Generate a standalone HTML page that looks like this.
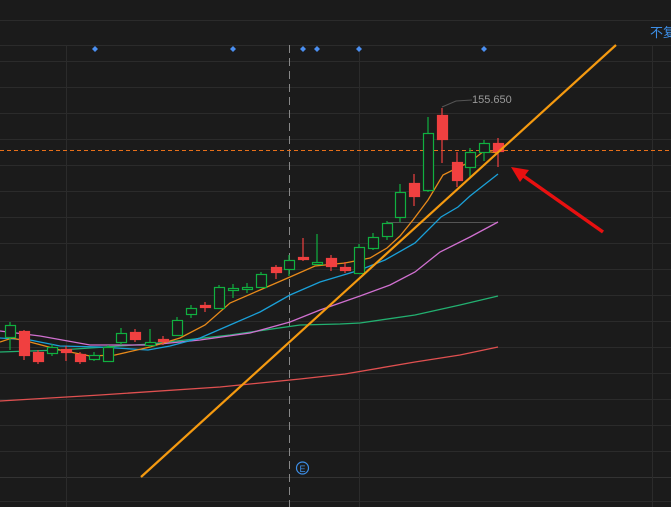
<!DOCTYPE html>
<html><head><meta charset="utf-8"><style>
html,body{margin:0;padding:0;background:#1b1b1b;width:671px;height:507px;overflow:hidden}
svg{display:block}
</style></head><body>
<svg width="671" height="507" viewBox="0 0 671 507" xmlns="http://www.w3.org/2000/svg">
<rect width="671" height="507" fill="#1b1b1b"/>
<g stroke="#2b2b2b" stroke-width="1">
<line x1="0" y1="20.5" x2="671" y2="20.5"/>
<line x1="0" y1="45.5" x2="671" y2="45.5"/>
<line x1="0" y1="61.5" x2="671" y2="61.5"/>
<line x1="0" y1="87.5" x2="671" y2="87.5"/>
<line x1="0" y1="113.5" x2="671" y2="113.5"/>
<line x1="0" y1="139.5" x2="671" y2="139.5"/>
<line x1="0" y1="165.5" x2="671" y2="165.5"/>
<line x1="0" y1="191.5" x2="671" y2="191.5"/>
<line x1="0" y1="217.5" x2="671" y2="217.5"/>
<line x1="0" y1="243.5" x2="671" y2="243.5"/>
<line x1="0" y1="269.5" x2="671" y2="269.5"/>
<line x1="0" y1="295.5" x2="671" y2="295.5"/>
<line x1="0" y1="321.5" x2="671" y2="321.5"/>
<line x1="0" y1="347.5" x2="671" y2="347.5"/>
<line x1="0" y1="373.5" x2="671" y2="373.5"/>
<line x1="0" y1="399.5" x2="671" y2="399.5"/>
<line x1="0" y1="425.5" x2="671" y2="425.5"/>
<line x1="0" y1="451.5" x2="671" y2="451.5"/>
<line x1="0" y1="477.5" x2="671" y2="477.5" stroke="#333"/>
<line x1="0" y1="501.5" x2="671" y2="501.5"/>
<line x1="66.5" y1="45" x2="66.5" y2="507"/>
<line x1="359.5" y1="45" x2="359.5" y2="507"/>
<line x1="652.5" y1="45" x2="652.5" y2="507"/>
</g>
<line x1="289.5" y1="45" x2="289.5" y2="507" stroke="#888" stroke-width="1" stroke-dasharray="8,5"/>
<text x="650" y="37" font-family="Liberation Sans, Noto Sans CJK SC, sans-serif" font-size="13" fill="#3d8fe8">不复</text>
<g fill="#4a8ef0">
<path d="M95 46l3 3-3 3-3-3z"/><path d="M233 46l3 3-3 3-3-3z"/><path d="M303 46l3 3-3 3-3-3z"/><path d="M317 46l3 3-3 3-3-3z"/><path d="M359 46l3 3-3 3-3-3z"/><path d="M484 46l3 3-3 3-3-3z"/>
</g>
<line x1="0" y1="150.5" x2="671" y2="150.5" stroke="#e8701a" stroke-width="1" stroke-dasharray="4,3"/>
<line x1="387" y1="222.5" x2="498" y2="222.5" stroke="#555" stroke-width="1"/>
<g fill="none" stroke-width="1.3">
<polyline stroke="#e05050" points="0,401 100,395 220,387 300,379 345,374 415,362 460,355 498,347"/>
<polyline stroke="#22b070" points="0,352 60,350 150,344 230,335 300,325 340,324 360,323 415,315 460,305 498,296"/>
<polyline stroke="#d070d0" points="0,331 40,336 90,345 150,345 200,340 250,333 290,322 320,310 360,296 390,285 415,272 440,252 470,237 498,222"/>
<polyline stroke="#1aa0d8" points="0,338 30,340 60,346 100,347 148,350 170,346 200,338 230,325 260,312 290,295 320,282 360,270 385,260 415,243 441,217 458,207 470,196 498,174"/>
<polyline stroke="#e88a1a" points="0,342 12,338 30,342 60,350 90,356 115,355 150,347 180,338 205,325 230,303 260,290 290,277 315,266 345,263 370,258 387,248 400,236 413,220 428,200 443,175 457,168 470,162 484,151 498,153"/>
</g>
<g stroke-width="1.2">
<g stroke="#10b040" fill="#1b1b1b">
<line x1="10" y1="322" x2="10" y2="350"/><rect x="5.5" y="325.5" width="10" height="12"/>
<line x1="52" y1="344" x2="52" y2="356"/><rect x="47.5" y="347.5" width="10" height="6"/>
<line x1="94" y1="352" x2="94" y2="361"/><rect x="89.5" y="355.5" width="10" height="4"/>
<line x1="108" y1="345" x2="108" y2="362"/><rect x="103.5" y="347.5" width="10" height="14"/>
<line x1="121" y1="328" x2="121" y2="345"/><rect x="116.5" y="333.5" width="10" height="9"/>
<line x1="150" y1="329" x2="150" y2="347"/><rect x="145.5" y="342.5" width="10" height="3"/>
<line x1="177" y1="317" x2="177" y2="336"/><rect x="172.5" y="320.5" width="10" height="15"/>
<line x1="191" y1="305" x2="191" y2="318"/><rect x="186.5" y="308.5" width="10" height="6"/>
<line x1="219" y1="285" x2="219" y2="309"/><rect x="214.5" y="287.5" width="10" height="21"/>
<line x1="233" y1="284" x2="233" y2="298"/><rect x="228.5" y="288.5" width="10" height="2"/>
<line x1="247" y1="283" x2="247" y2="293"/><rect x="242.5" y="287.5" width="10" height="2"/>
<line x1="261" y1="272" x2="261" y2="288"/><rect x="256.5" y="274.5" width="10" height="13"/>
<line x1="289" y1="255" x2="289" y2="276"/><rect x="284.5" y="260.5" width="10" height="9"/>
<line x1="317" y1="234" x2="317" y2="265"/><rect x="312.5" y="262.5" width="10" height="2"/>
<line x1="359" y1="244" x2="359" y2="274"/><rect x="354.5" y="247.5" width="10" height="26"/>
<line x1="373" y1="233" x2="373" y2="250"/><rect x="368.5" y="237.5" width="10" height="11"/>
<line x1="387" y1="221" x2="387" y2="240"/><rect x="382.5" y="223.5" width="10" height="13"/>
<line x1="400" y1="184" x2="400" y2="222"/><rect x="395.5" y="192.5" width="10" height="25"/>
<line x1="428" y1="117" x2="428" y2="192"/><rect x="423.5" y="133.5" width="10" height="57"/>
<line x1="470" y1="148" x2="470" y2="177"/><rect x="465.5" y="152.5" width="10" height="15"/>
<line x1="484" y1="140" x2="484" y2="161"/><rect x="479.5" y="143.5" width="10" height="9"/>
</g>
<g stroke="#f04040" fill="#f04040">
<line x1="24" y1="330" x2="24" y2="360"/><rect x="19.5" y="331.5" width="10" height="24"/>
<line x1="38" y1="350" x2="38" y2="364"/><rect x="33.5" y="352.5" width="10" height="9"/>
<line x1="66" y1="346" x2="66" y2="361"/><rect x="61.5" y="349.5" width="10" height="3"/>
<line x1="80" y1="352" x2="80" y2="364"/><rect x="75.5" y="354.5" width="10" height="7"/>
<line x1="135" y1="329" x2="135" y2="342"/><rect x="130.5" y="332.5" width="10" height="7"/>
<line x1="163" y1="336" x2="163" y2="345"/><rect x="158.5" y="339.5" width="10" height="2"/>
<line x1="205" y1="302" x2="205" y2="312"/><rect x="200.5" y="305.5" width="10" height="2"/>
<line x1="276" y1="265" x2="276" y2="279"/><rect x="271.5" y="267.5" width="10" height="5"/>
<line x1="303" y1="238" x2="303" y2="261"/><rect x="298.5" y="257.5" width="10" height="2"/>
<line x1="331" y1="255" x2="331" y2="271"/><rect x="326.5" y="258.5" width="10" height="8"/>
<line x1="345" y1="262" x2="345" y2="273"/><rect x="340.5" y="267.5" width="10" height="3"/>
<line x1="414" y1="174" x2="414" y2="206"/><rect x="409.5" y="183.5" width="10" height="13"/>
<line x1="442" y1="108" x2="442" y2="163"/><rect x="437.5" y="115.5" width="10" height="24"/>
<line x1="457" y1="152" x2="457" y2="187"/><rect x="452.5" y="162.5" width="10" height="18"/>
<line x1="498" y1="138" x2="498" y2="167"/><rect x="493.5" y="143.5" width="10" height="8"/>
</g>
</g>
<polyline points="442,107 456,101 472,100" fill="none" stroke="#555" stroke-width="1"/>
<text x="472" y="103" font-family="Liberation Sans, sans-serif" font-size="11" fill="#999">155.650</text>
<line x1="141" y1="477" x2="616" y2="45" stroke="#f59a10" stroke-width="2.2"/>
<line x1="603" y1="232" x2="522" y2="175" stroke="#e81010" stroke-width="3.5"/>
<path d="M511 167 L529 170 L520 182 Z" fill="#e81010"/>
<circle cx="302.5" cy="468" r="6" fill="none" stroke="#3d8fe8" stroke-width="1.2"/>
<text x="302.5" y="472" text-anchor="middle" font-family="Liberation Sans, sans-serif" font-size="9" fill="#3d8fe8">E</text>
</svg>
</body></html>
